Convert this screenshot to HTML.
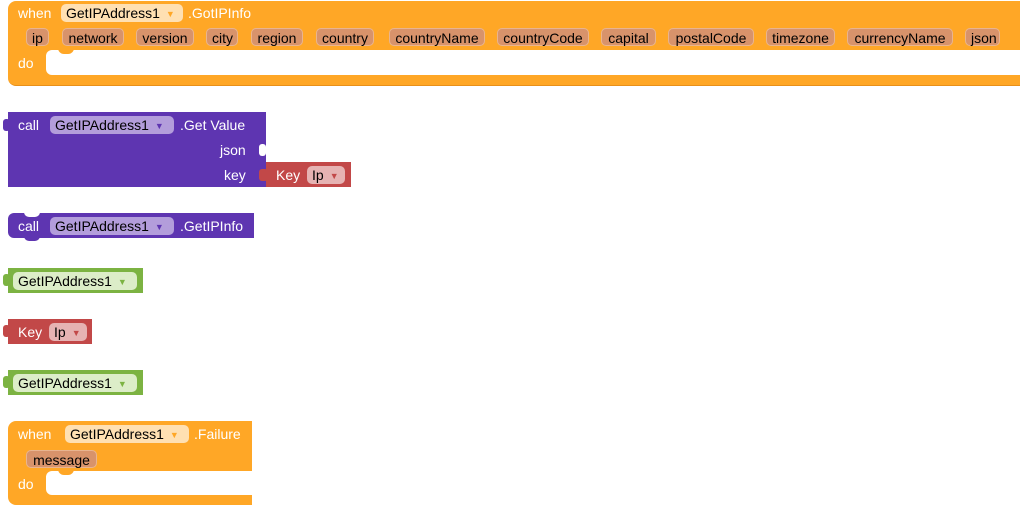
<!DOCTYPE html><html><head><style>
body{margin:0;width:1020px;height:506px;background:#fff;font-family:"Liberation Sans",sans-serif;font-size:14px;position:relative;overflow:hidden}
.a{position:absolute}
.t{position:absolute;color:#fff;line-height:16px}
.chip{position:absolute;height:18px;line-height:18px;border-radius:5px;color:#000;padding:0 5px;box-sizing:border-box}
.p{background:#d8936b;border:1px solid #e9b48f;text-align:center;top:28px}
.dd{font-size:9px;margin-left:6px;vertical-align:1px}
</style></head><body>
<!-- top event -->
<div class="a" style="left:8px;top:1px;width:1012px;height:84px;background:#ffa726;border-radius:8px 0 0 8px;border-bottom:1px solid #e8901a"></div>
<div class="a" style="left:46px;top:50px;width:974px;height:25px;background:#fff;border-radius:6px 0 0 6px"></div>
<div class="a" style="left:58px;top:48px;width:16px;height:6px;background:#ffa726;border-radius:0 0 6px 6px"></div>
<div class="t" style="left:18px;top:5px">when</div>
<div class="chip" style="left:61px;top:4px;width:122px;background:#ffe0b2">GetIPAddress1<span class="dd" style="color:#ffa726">▼</span></div>
<div class="t" style="left:188px;top:5px">.GotIPInfo</div>
<div class="chip p" style="left:26px;width:23px">ip</div>
<div class="chip p" style="left:62px;width:62px">network</div>
<div class="chip p" style="left:136px;width:58px">version</div>
<div class="chip p" style="left:206px;width:32px">city</div>
<div class="chip p" style="left:251px;width:52px">region</div>
<div class="chip p" style="left:316px;width:58px">country</div>
<div class="chip p" style="left:389px;width:96px">countryName</div>
<div class="chip p" style="left:497px;width:92px">countryCode</div>
<div class="chip p" style="left:601px;width:55px">capital</div>
<div class="chip p" style="left:668px;width:86px">postalCode</div>
<div class="chip p" style="left:766px;width:69px">timezone</div>
<div class="chip p" style="left:847px;width:106px">currencyName</div>
<div class="chip p" style="left:965px;width:35px">json</div>
<div class="t" style="left:18px;top:55px">do</div>

<!-- call get value -->
<div class="a" style="left:8px;top:112px;width:258px;height:75px;background:#5e35b1"></div>
<div class="a" style="left:3px;top:119px;width:7px;height:12px;background:#5e35b1;border-radius:3px"></div>
<div class="t" style="left:18px;top:117px">call</div>
<div class="chip" style="left:50px;top:116px;width:124px;background:#b39ddb">GetIPAddress1<span class="dd" style="color:#5e35b1">▼</span></div>
<div class="t" style="left:180px;top:117px">.Get Value</div>
<div class="t" style="left:220px;top:142px">json</div>
<div class="a" style="left:259px;top:144px;width:7px;height:12px;background:#fff;border-radius:3px"></div>
<div class="t" style="left:224px;top:167px">key</div>
<div class="a" style="left:266px;top:162px;width:85px;height:25px;background:#c24848"></div>
<div class="a" style="left:259px;top:169px;width:9px;height:12px;background:#c24848;border-radius:3px"></div>
<div class="t" style="left:276px;top:167px">Key</div>
<div class="chip" style="left:307px;top:166px;width:38px;background:#e6b3b3">Ip<span class="dd" style="color:#c24848">▼</span></div>

<!-- call GetIPInfo -->
<div class="a" style="left:8px;top:213px;width:246px;height:25px;background:#5e35b1;border-radius:6px 0 0 6px"></div>
<div class="a" style="left:24px;top:236px;width:16px;height:5px;background:#5e35b1;border-radius:0 0 6px 6px"></div>
<div class="a" style="left:24px;top:212px;width:16px;height:5px;background:#fff;border-radius:0 0 6px 6px"></div>
<div class="t" style="left:18px;top:218px">call</div>
<div class="chip" style="left:50px;top:217px;width:124px;background:#b39ddb">GetIPAddress1<span class="dd" style="color:#5e35b1">▼</span></div>
<div class="t" style="left:180px;top:218px">.GetIPInfo</div>

<!-- green -->
<div class="a" style="left:8px;top:268px;width:135px;height:25px;background:#7cb342"></div>
<div class="a" style="left:3px;top:274px;width:7px;height:12px;background:#7cb342;border-radius:3px"></div>
<div class="chip" style="left:13px;top:272px;width:124px;background:#dcedc8">GetIPAddress1<span class="dd" style="color:#7cb342">▼</span></div>
<!-- key -->
<div class="a" style="left:8px;top:319px;width:84px;height:25px;background:#c24848"></div>
<div class="a" style="left:3px;top:325px;width:7px;height:12px;background:#c24848;border-radius:3px"></div>
<div class="t" style="left:18px;top:324px">Key</div>
<div class="chip" style="left:49px;top:323px;width:38px;background:#e6b3b3">Ip<span class="dd" style="color:#c24848">▼</span></div>
<!-- green 2 -->
<div class="a" style="left:8px;top:370px;width:135px;height:25px;background:#7cb342"></div>
<div class="a" style="left:3px;top:376px;width:7px;height:12px;background:#7cb342;border-radius:3px"></div>
<div class="chip" style="left:13px;top:374px;width:124px;background:#dcedc8">GetIPAddress1<span class="dd" style="color:#7cb342">▼</span></div>

<!-- failure -->
<div class="a" style="left:8px;top:421px;width:244px;height:84px;background:#ffa726;border-radius:8px 0 0 8px"></div>
<div class="a" style="left:46px;top:471px;width:206px;height:24px;background:#fff;border-radius:6px 0 0 6px"></div>
<div class="a" style="left:58px;top:469px;width:16px;height:6px;background:#ffa726;border-radius:0 0 6px 6px"></div>
<div class="t" style="left:18px;top:426px">when</div>
<div class="chip" style="left:65px;top:425px;width:124px;background:#ffe0b2">GetIPAddress1<span class="dd" style="color:#ffa726">▼</span></div>
<div class="t" style="left:194px;top:426px">.Failure</div>
<div class="chip p" style="left:26px;top:450px;width:71px">message</div>
<div class="t" style="left:18px;top:476px">do</div>
</body></html>
